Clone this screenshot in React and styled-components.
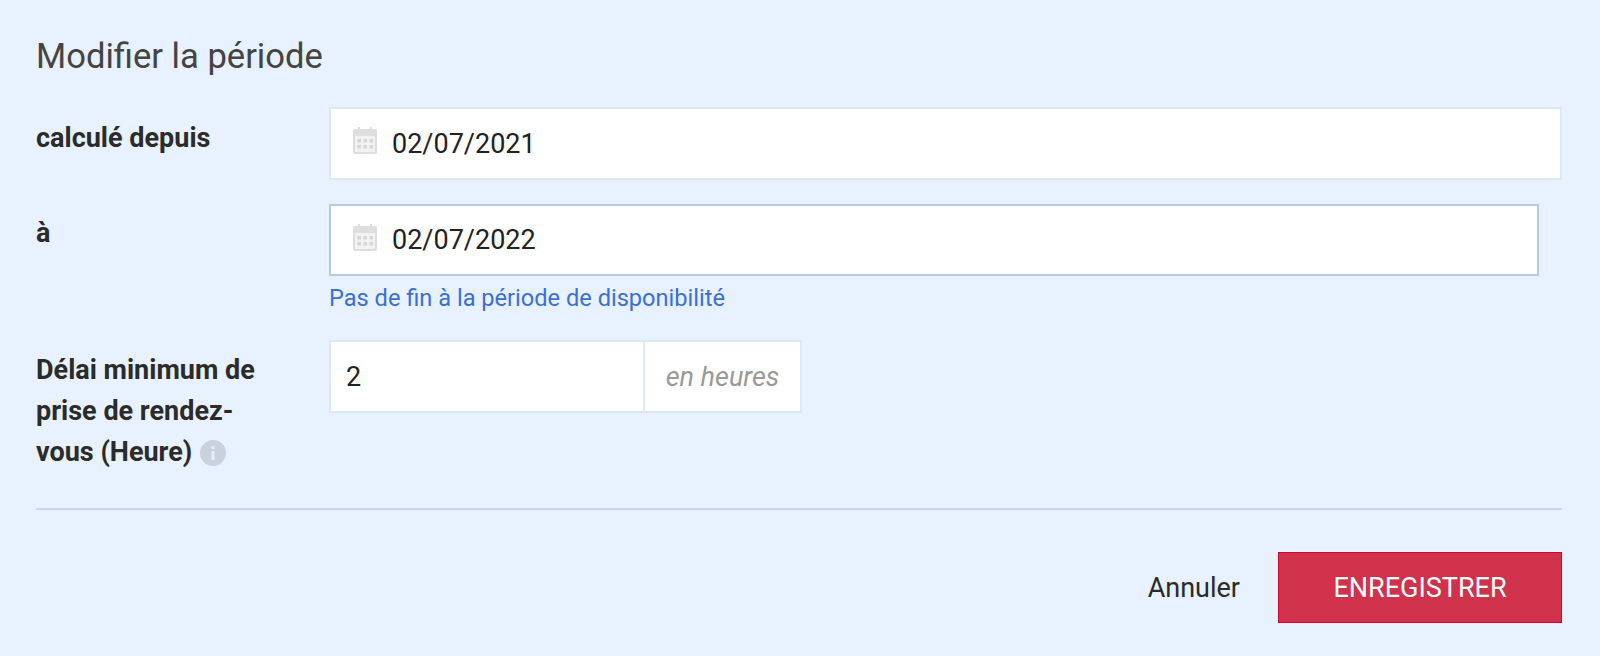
import styled, { createGlobalStyle } from "styled-components";

const GlobalStyle = createGlobalStyle`
  html, body {
    margin: 0;
    padding: 0;
    background: #e8f1ff;
  }
  body {
    font-family: Roboto, "Liberation Sans", sans-serif;
  }
`;

const Page = styled.div`
  box-sizing: border-box;
  width: 1600px;
  height: 656px;
  padding: 34px 38px 0 36px;
  background: #e8f1ff;
  overflow: hidden;
`;

const Title = styled.h2`
  margin: 0 0 29px;
  font-size: 34.6px;
  line-height: 44px;
  font-weight: 400;
  color: #444;
`;

const Row = styled.div`
  display: grid;
  grid-template-columns: 293px 1fr;
  margin-bottom: ${(p) => p.$gap || 24}px;
`;

const Label = styled.label`
  font-size: 27px;
  line-height: 41px;
  font-weight: 700;
  color: #2b2b2b;
  padding-top: ${(p) => p.$top ?? 8}px;
`;

const Field = styled.div`
  box-sizing: border-box;
  display: flex;
  align-items: center;
  gap: 15px;
  height: ${(p) => (p.$focus ? 72 : 73)}px;
  width: ${(p) => (p.$focus ? "1210px" : "100%")};
  padding-left: 22px;
  background: #fff;
  border: 2px solid ${(p) => (p.$focus ? "#b3cbe9" : "#dde8f6")};
`;

const Value = styled.span`
  font-size: 27px;
  color: #222;
`;

const Hint = styled.a`
  display: block;
  margin-top: 8px;
  font-size: 23.6px;
  line-height: 28px;
  color: #3a6fd8;
`;

const InputGroup = styled.div`
  display: flex;
  width: 473px;
  height: 73px;
`;

const NumberField = styled.div`
  box-sizing: border-box;
  display: flex;
  align-items: center;
  width: 316px;
  padding-left: 15px;
  background: #fff;
  border: 2px solid #dde8f6;
`;

const Addon = styled.div`
  box-sizing: border-box;
  display: flex;
  align-items: center;
  justify-content: center;
  flex: 1;
  background: #fff;
  border: 2px solid #dde8f6;
  border-left: none;
  font-size: 27px;
  font-style: italic;
  color: #9a9a9a;
`;

const InfoIcon = styled.svg`
  width: 26px;
  height: 26px;
  margin-left: 8px;
  vertical-align: -5px;
`;

const Divider = styled.hr`
  margin: 0;
  border: none;
  border-top: 2px solid #c9d6ec;
`;

const Footer = styled.div`
  display: flex;
  justify-content: flex-end;
  align-items: center;
  gap: 38px;
  margin-top: 42px;
`;

const CancelButton = styled.button`
  padding: 0;
  border: none;
  background: none;
  font-family: inherit;
  font-size: 27px;
  color: #2b2b2b;
`;

const SaveButton = styled.button`
  box-sizing: border-box;
  width: 284px;
  height: 71px;
  background: #d1324b;
  border: 1px solid #d9002c;
  font-family: inherit;
  font-size: 27px;
  color: #fff;
`;

const CalendarSvg = styled.svg`
  flex: none;
  margin-bottom: 6px;
`;

const CalendarIcon = () => (
  <CalendarSvg width="24" height="27" viewBox="0 0 24 27" aria-hidden="true">
    <rect x="5" y="0" width="2" height="5" fill="#dcdcdc" />
    <rect x="17" y="0" width="2" height="5" fill="#dcdcdc" />
    <path fill="#dedede" d="M2 2h20a2 2 0 0 1 2 2v21a2 2 0 0 1-2 2H2a2 2 0 0 1-2-2V4a2 2 0 0 1 2-2Z" />
    <rect x="2" y="9" width="20" height="16" fill="#f2f2f2" />
    {[4.5, 10.5, 16.5].map((x) =>
      [12, 18].map((y) => <rect key={`${x}-${y}`} x={x} y={y} width="3.5" height="3.5" fill="#d6d6d6" />)
    )}
  </CalendarSvg>
);

export default function App() {
  return (
    <Page>
      <GlobalStyle />
      <Title>Modifier la période</Title>
      <Row>
        <Label $top={11}>calculé depuis</Label>
        <Field>
          <CalendarIcon />
          <Value>02/07/2021</Value>
        </Field>
      </Row>
      <Row $gap={28}>
        <Label $top={9}>à</Label>
        <div>
          <Field $focus>
            <CalendarIcon />
            <Value>02/07/2022</Value>
          </Field>
          <Hint>Pas de fin à la période de disponibilité</Hint>
        </div>
      </Row>
      <Row $gap={35}>
        <Label $top={10}>
          Délai minimum de
          <br />
          prise de rendez-
          <br />
          vous (Heure)
          <InfoIcon viewBox="0 0 26 26" aria-hidden="true">
            <circle cx="13" cy="13" r="13" fill="#c9d1dc" />
            <rect x="11.5" y="11" width="3" height="9" fill="#e7edf5" />
            <rect x="11.5" y="6" width="3" height="3" fill="#e7edf5" />
          </InfoIcon>
        </Label>
        <InputGroup>
          <NumberField>
            <Value>2</Value>
          </NumberField>
          <Addon>en heures</Addon>
        </InputGroup>
      </Row>
      <Divider />
      <Footer>
        <CancelButton>Annuler</CancelButton>
        <SaveButton>ENREGISTRER</SaveButton>
      </Footer>
    </Page>
  );
}
